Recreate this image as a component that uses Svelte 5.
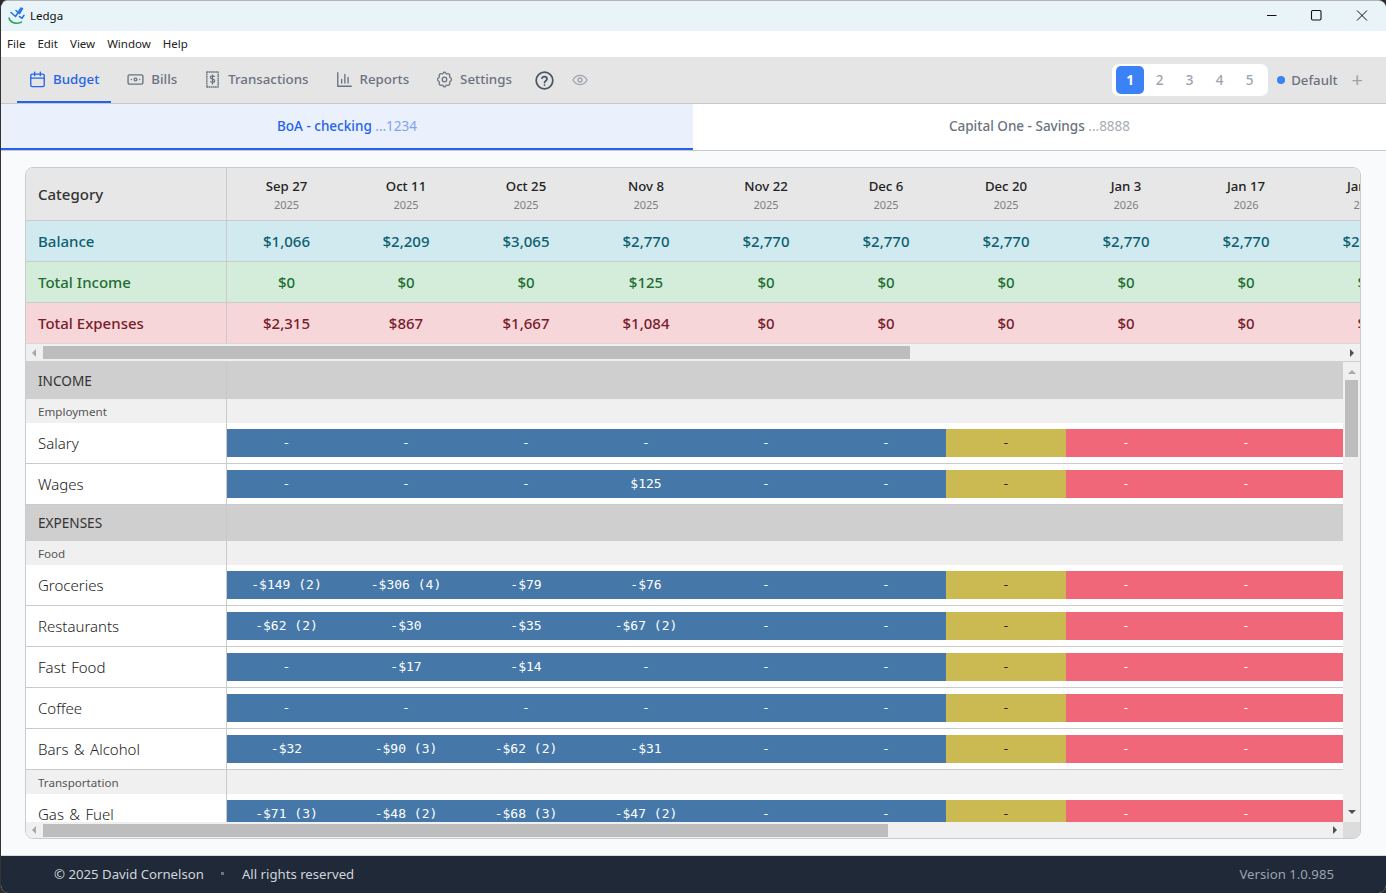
<script>
  const dates = [['Sep 27','2025'],['Oct 11','2025'],['Oct 25','2025'],['Nov 8','2025'],['Nov 22','2025'],['Dec 6','2025'],['Dec 20','2025'],['Jan 3','2026'],['Jan 17','2026'],['Jan 31','2026']];
  const bal = ['$1,066','$2,209','$3,065','$2,770','$2,770','$2,770','$2,770','$2,770','$2,770','$2,770'];
  const inc = ['$0','$0','$0','$125','$0','$0','$0','$0','$0','$0'];
  const exp = ['$2,315','$867','$1,667','$1,084','$0','$0','$0','$0','$0','$0'];
  const nav = ['Budget','Bills','Transactions','Reports','Settings'];
  const tone = (i) => (i < 6 ? 'blue' : i === 6 ? 'yellow' : 'red');
  const fill = (a) => [...a, ...Array(10 - a.length).fill('-')];
  const body = [
    { t: 'sec', n: 'INCOME' },
    { t: 'grp', n: 'Employment' },
    { t: 'row', n: 'Salary', v: fill([]) },
    { t: 'row', n: 'Wages', v: fill(['-','-','-','$125']) },
    { t: 'sec', n: 'EXPENSES' },
    { t: 'grp', n: 'Food' },
    { t: 'row', n: 'Groceries', v: fill(['-$149 (2)','-$306 (4)','-$79','-$76']) },
    { t: 'row', n: 'Restaurants', v: fill(['-$62 (2)','-$30','-$35','-$67 (2)']) },
    { t: 'row', n: 'Fast Food', v: fill(['-','-$17','-$14','-']) },
    { t: 'row', n: 'Coffee', v: fill([]) },
    { t: 'row', n: 'Bars & Alcohol', v: fill(['-$32','-$90 (3)','-$62 (2)','-$31']) },
    { t: 'grp', n: 'Transportation' },
    { t: 'row', n: 'Gas & Fuel', v: fill(['-$71 (3)','-$48 (2)','-$68 (3)','-$47 (2)']) },
  ];
</script>

<div class="win">
  <div class="title">
    <svg class="logo" width="18" height="21" viewBox="0 0 18 21" fill="none">
      <path d="M1 14C2 18.500 8 21 13.500 18" stroke="#2fa866" stroke-width="1.500" stroke-linecap="round"/>
      <path d="M3 8.500l4.500 4 5.500-8.500M8 6.500l3.500 3 3-5M11.500 12.500l2.500 1.800 2-3" stroke="#2f76e0" stroke-width="1.600" stroke-linecap="round" stroke-linejoin="round"/>
    </svg>
    <span class="tname">Ledga</span>
    <div class="wbtns">
      <svg width="46" height="31" viewBox="0 1 46 31"><path d="M19 15.500h9.500" stroke="#111" fill="none"/></svg>
      <svg width="46" height="31" viewBox="0 1 46 31"><rect x="17.500" y="10.500" width="9.500" height="9.500" rx="1.200" stroke="#111" fill="none" stroke-width="1.100"/></svg>
      <svg width="46" height="31" viewBox="0 1 46 31"><path d="M17 10.500l10 10M27 10.500l-10 10" stroke="#111" fill="none"/></svg>
    </div>
  </div>
  <div class="menu"><span>File</span><span>Edit</span><span>View</span><span>Window</span><span>Help</span></div>

  <div class="nav">
    {#each nav as n, i}
      <div class="navitem" class:on={i === 0}>
        {#if i === 0}
          <svg class="ic" viewBox="0 0 24 24" fill="none" stroke="currentColor" stroke-width="1.900" stroke-linecap="round" stroke-linejoin="round"><rect x="2.500" y="4.500" width="19" height="17.500" rx="2"/><path d="M2.500 10h19M8 1.500v5M16 1.500v5"/></svg>
        {:else if i === 1}
          <svg class="ic" viewBox="0 0 24 24" fill="none" stroke="currentColor" stroke-width="1.900" stroke-linecap="round" stroke-linejoin="round"><rect x="1.500" y="5.500" width="21" height="13" rx="2"/><circle cx="12" cy="12" r="2"/><path d="M6 12h.01M18 12h.01"/></svg>
        {:else if i === 2}
          <svg class="ic" viewBox="0 0 24 24" fill="none" stroke="currentColor" stroke-width="2" stroke-linejoin="round"><path d="M4 1.500h16v21H4z" stroke-dasharray="2.400 .6"/><path d="M15 8.500c-.5-1-1.600-1.500-3-1.500-1.700 0-3 .8-3 2.300 0 3 6 1.500 6 4.500 0 1.500-1.300 2.300-3 2.300-1.400 0-2.500-.5-3-1.500M12 5v14" stroke-width="1.700"/></svg>
        {:else if i === 3}
          <svg class="ic" viewBox="0 0 24 24" fill="none" stroke="currentColor" stroke-width="1.900" stroke-linecap="round"><path d="M2.500 2.500v19h19M8 17v-5M12.500 17V5M17 17V9"/></svg>
        {:else}
          <svg class="ic" viewBox="0 0 24 24" fill="none" stroke="currentColor" stroke-width="1.800" stroke-linejoin="round"><path d="M10.300 2.800c.4-1.700 3-1.700 3.400 0a1.800 1.800 0 0 0 2.600 1.100c1.500-.9 4 1.600 3.100 3.100a1.800 1.800 0 0 0 1.100 2.600c1.700.4 1.700 4.400 0 4.800a1.800 1.800 0 0 0-1.100 2.600c.9 1.500-1.600 4-3.100 3.100a1.800 1.800 0 0 0-2.600 1.100c-.4 1.700-3 1.700-3.400 0a1.800 1.800 0 0 0-2.600-1.100c-1.500.9-4-1.600-3.100-3.100a1.800 1.800 0 0 0-1.100-2.600c-1.700-.4-1.700-4.400 0-4.800A1.800 1.800 0 0 0 4.600 7c-.9-1.500 1.600-4 3.100-3.100a1.800 1.800 0 0 0 2.600-1.100z"/><circle cx="12" cy="12" r="3.200"/></svg>
        {/if}
        <span>{n}</span>
      </div>
    {/each}
    <svg class="help" viewBox="0 0 24 24" fill="none" stroke="#4b5563" stroke-width="2.200" stroke-linecap="round"><circle cx="12" cy="12" r="10.500"/><path d="M8.800 9.200a3.300 3.300 0 0 1 6.400 1c0 2.200-3.200 2.600-3.200 4.400M12 17.800h.01"/></svg>
    <svg class="eye" viewBox="0 0 24 24" fill="none" stroke="#9ca3af" stroke-width="1.900"><path d="M1.500 12c2.500-4.500 6.500-6.800 10.500-6.800s8 2.300 10.500 6.800c-2.500 4.500-6.500 6.800-10.500 6.800S4 16.500 1.500 12z"/><circle cx="12" cy="12" r="3"/></svg>
    <div class="right">
      <div class="pager">
        {#each [1,2,3,4,5] as p}<span class="pg" class:cur={p === 1}>{p}</span>{/each}
      </div>
      <span class="dot"></span>
      <span class="deflt">Default</span>
      <span class="plus">+</span>
    </div>
  </div>

  <div class="tabs">
    <div class="tab on">BoA - checking <span class="mask">...1234</span></div>
    <div class="tab">Capital One - Savings <span class="mask">...8888</span></div>
  </div>

  <div class="main">
    <div class="card">
      <div class="top">
        <div class="trow head">
          <div class="lab">Category</div>
          <div class="cols">{#each dates as d}<div class="c"><div class="d">{d[0]}</div><div class="y">{d[1]}</div></div>{/each}</div>
        </div>
        <div class="trow sum balance">
          <div class="lab">Balance</div>
          <div class="cols">{#each bal as d}<div class="c">{d}</div>{/each}</div>
        </div>
        <div class="trow sum income">
          <div class="lab">Total Income</div>
          <div class="cols">{#each inc as d}<div class="c">{d}</div>{/each}</div>
        </div>
        <div class="trow sum expense">
          <div class="lab">Total Expenses</div>
          <div class="cols">{#each exp as d}<div class="c">{d}</div>{/each}</div>
        </div>
      </div>
      <div class="hbar upper">
        <span class="arr l"></span>
        <div class="track"><div class="thumb t1"></div></div>
        <span class="arr r"></span>
      </div>
      <div class="mid">
        <div class="rows">
          {#each body as r}
            {#if r.t === 'sec'}
              <div class="sec"><div class="lab">{r.n}</div></div>
            {:else if r.t === 'grp'}
              <div class="grp"><div class="lab">{r.n}</div></div>
            {:else}
              <div class="row">
                <div class="lab">{r.n}</div>
                <div class="cells">
                  {#each r.v as v, i}<div class="cell {tone(i)}"><span>{v}</span></div>{/each}
                </div>
              </div>
            {/if}
          {/each}
        </div>
        <div class="vbar">
          <span class="varr up"></span>
          <div class="vtrack"><div class="vthumb"></div></div>
          <span class="varr dn"></span>
        </div>
      </div>
      <div class="bottom">
        <div class="hbar lower">
          <span class="arr l"></span>
          <div class="track"><div class="thumb t2"></div></div>
          <span class="arr r"></span>
        </div>
        <div class="corner"></div>
      </div>
    </div>
  </div>

  <div class="foot">
    <span>© 2025 David Cornelson</span>
    <span class="sep"></span>
    <span>All rights reserved</span>
    <span class="ver">Version 1.0.985</span>
  </div>
</div>

<style>
  :global(body) { margin: 0; background: #2b2b2b; }
  .win {
    width: 1386px; height: 893px; box-sizing: border-box; overflow: hidden;
    display: flex; flex-direction: column; background: #f9fafb;
    border-radius: 8px; border-left: 1px solid #333; border-top: 1px solid #b5b5b5;
    font-family: "Noto Sans", "Open Sans", sans-serif; font-size: 14px;
  }
  .title { height: 30px; background: #e8f4f7; display: flex; align-items: center; flex: none; }
  .logo { margin-left: 7px; margin-bottom: 3px; }
  .tname { font-size: 11.500px; color: #111; margin-left: 4px; margin-bottom: 1px; }
  .wbtns { margin-left: auto; display: flex; }
  .menu { height: 25px; padding-bottom: 1px; background: #fff; display: flex; align-items: center; gap: 12px; padding-left: 6px; font-size: 11.500px; color: #222; flex: none; }
  .nav { height: 46px; background: #e5e5e5; border-bottom: 1px solid #c8c8cc; display: flex; align-items: stretch; padding-left: 16px; flex: none; }
  .navitem { display: flex; align-items: center; gap: 7px; padding: 0 13px 0 12px; margin-right: 2px; color: #6b7280; font-weight: 500; font-size: 13.300px; border-bottom: 2px solid transparent; }
  .navitem.on { color: #2563eb; border-bottom-color: #2563eb; margin-right: 4px; padding-right: 12px; }
  .ic { width: 17px; height: 17px; }
  .help { width: 19px; height: 19px; align-self: center; margin-left: 8px; }
  .eye { width: 16px; height: 16px; align-self: center; margin-left: 18px; }
  .right { margin-left: auto; display: flex; align-items: center; padding-right: 23px; }
  .pager { background: #fff; border-radius: 7px; display: flex; padding: 2px 4px; }
  .pg { width: 28px; height: 28px; margin-right: 2px; box-sizing: border-box; display: flex; align-items: center; justify-content: center; color: #9ca3af; font-weight: 500; font-size: 13.500px; border-radius: 5px; padding-right: 1px; }
  .pg:last-child { margin-right: 0; }
  .pg.cur { background: #3b82f6; color: #fff; font-weight: 700; padding-right: 0; }
  .dot { width: 8px; height: 8px; border-radius: 50%; background: #3b82f6; margin-left: 9px; }
  .deflt { color: #6b7280; font-weight: 500; font-size: 13.200px; margin-left: 6px; }
  .plus { color: #9ca3af; font-size: 20px; margin-left: 14px; line-height: 1; }
  .tabs { height: 47px; display: flex; border-bottom: 1px solid #c8c8cc; background: #fff; flex: none; box-sizing: border-box; }
  .tab { flex: 1; display: flex; align-items: center; justify-content: center; white-space: pre; font-size: 13.500px; font-weight: 500; color: #6b7280; border-bottom: 2px solid transparent; }
  .tab.on { flex: 0 0 692px; background: #ebf1fc; color: #2563eb; border-bottom-color: #2563eb; }
  .mask { color: #a8adb6; font-weight: 400; }
  .tab.on .mask { color: #7fa3ee; }
  .main { flex: 1; min-height: 0; padding: 16px 25px 16px 24px; display: flex; }
  .card { flex: 1; border: 1px solid #cbcbcb; border-radius: 8px; overflow: hidden; display: flex; flex-direction: column; background: #fff; min-width: 0; }
  .top { flex: none; overflow: hidden; }
  .trow { display: flex; border-bottom: 1px solid #cbcbcb; box-sizing: border-box; }
  .lab { width: 201px; flex: none; box-sizing: border-box; padding-left: 12px; border-right: 1px solid #cbcbcb; display: flex; align-items: center; }
  .cols { display: flex; }
  .c { width: 120px; flex: none; text-align: center; }
  .c:first-child { width: 119px; }
  .head { height: 53px; background: #e7e7e7; }
  .head .lab { font-size: 15px; font-weight: 500; color: #333; }
  .head .cols { align-items: center; padding-top: 2px; }
  .d { font-size: 13.200px; font-weight: 500; color: #222; line-height: 18px; }
  .y { font-size: 11px; color: #808080; line-height: 17px; margin-top: 1px; }
  .sum { height: 41px; font-size: 15px; font-weight: 500; }
  .sum .cols { align-items: center; }
  .balance { background: #d1eaef; color: #0c5f70; }
  .income { background: #d4edda; color: #1f6e34; }
  .expense { background: #f7d6da; color: #78202a; border-bottom-color: #d8d8d8; }
  .hbar { display: flex; align-items: center; background: #f0f0f0; height: 17px; flex: none; }
  .upper { border-bottom: 1px solid #cfcfcf; height: 17px; }
  .arr { width: 0; height: 0; border-top: 4px solid transparent; border-bottom: 4px solid transparent; flex: none; }
  .arr.l { border-right: 4px solid #a8a8a8; margin: 0 7px 0 6px; }
  .arr.r { border-left: 4px solid #505050; margin: 0 6px 0 6px; }
  .track { flex: 1; height: 13px; }
  .thumb { height: 13px; background: #bdbdbd; }
  .t1 { width: 867px; }
  .t2 { width: 845px; }
  .mid { flex: 1; min-height: 0; display: flex; }
  .rows { flex: 1; min-width: 0; overflow: hidden; }
  .sec { height: 36px; background: #cfcfcf; display: flex; box-sizing: border-box; }
  .sec:first-child { height: 37px; }
  .sec .lab { font-size: 13.600px; color: #333; border-right-color: #c8c8c8; padding-bottom: 1px; }
  .sec:first-child .lab { padding-bottom: 0; }
  .grp { height: 24px; background: #f0f0f0; display: flex; box-sizing: border-box; }
  .grp .lab { font-size: 11.600px; color: #555; }
  .row { height: 41px; display: flex; border-bottom: 1px solid #cbcbcb; box-sizing: border-box; background: #fff; }
  .row .lab { font-size: 15px; color: #222; font-weight: 300; word-spacing: 1.500px; }
  .cells { display: flex; padding: 6px 0; flex: none; }
  .cell { width: 120px; flex: none; display: flex; align-items: center; justify-content: center; color: #fff; font-family: "DejaVu Sans Mono", "Liberation Mono", monospace; font-size: 13px; height: 28px; padding-bottom: 1px; box-sizing: border-box; }
  .cell:first-child { width: 119px; }
  .blue { background: #4577a8; }
  .yellow { background: #cbb951; color: #222; }
  .red { background: #f0677a; }
  .vbar { width: 17px; flex: none; background: #f0f0f0; display: flex; flex-direction: column; align-items: center; box-sizing: border-box; }
  .vtrack { flex: 1; width: 13px; }
  .vthumb { height: 77px; background: #bdbdbd; }
  .varr { width: 0; height: 0; border-left: 4px solid transparent; border-right: 4px solid transparent; flex: none; }
  .varr.up { border-bottom: 4px solid #a8a8a8; margin: 8px 0 6px; }
  .varr.dn { border-top: 4px solid #505050; margin: 0 0 8px; }
  .bottom { display: flex; flex: none; height: 16px; }
  .bottom .hbar { flex: 1; height: 16px; min-width: 0; }
  .corner { width: 17px; background: #dcdcdc; flex: none; }
  .foot { height: 38px; background: #1f2937; border-top: 1px solid #d8d8d8; color: #d1d5db; display: flex; align-items: center; padding: 0 52px 2px 53px; flex: none; font-size: 13.200px; box-sizing: border-box; }
  .sep { width: 3px; height: 3px; background: #6b7280; margin: 0 18px 0 17px; }
  .ver { margin-left: auto; color: #9ca3af; }
</style>
